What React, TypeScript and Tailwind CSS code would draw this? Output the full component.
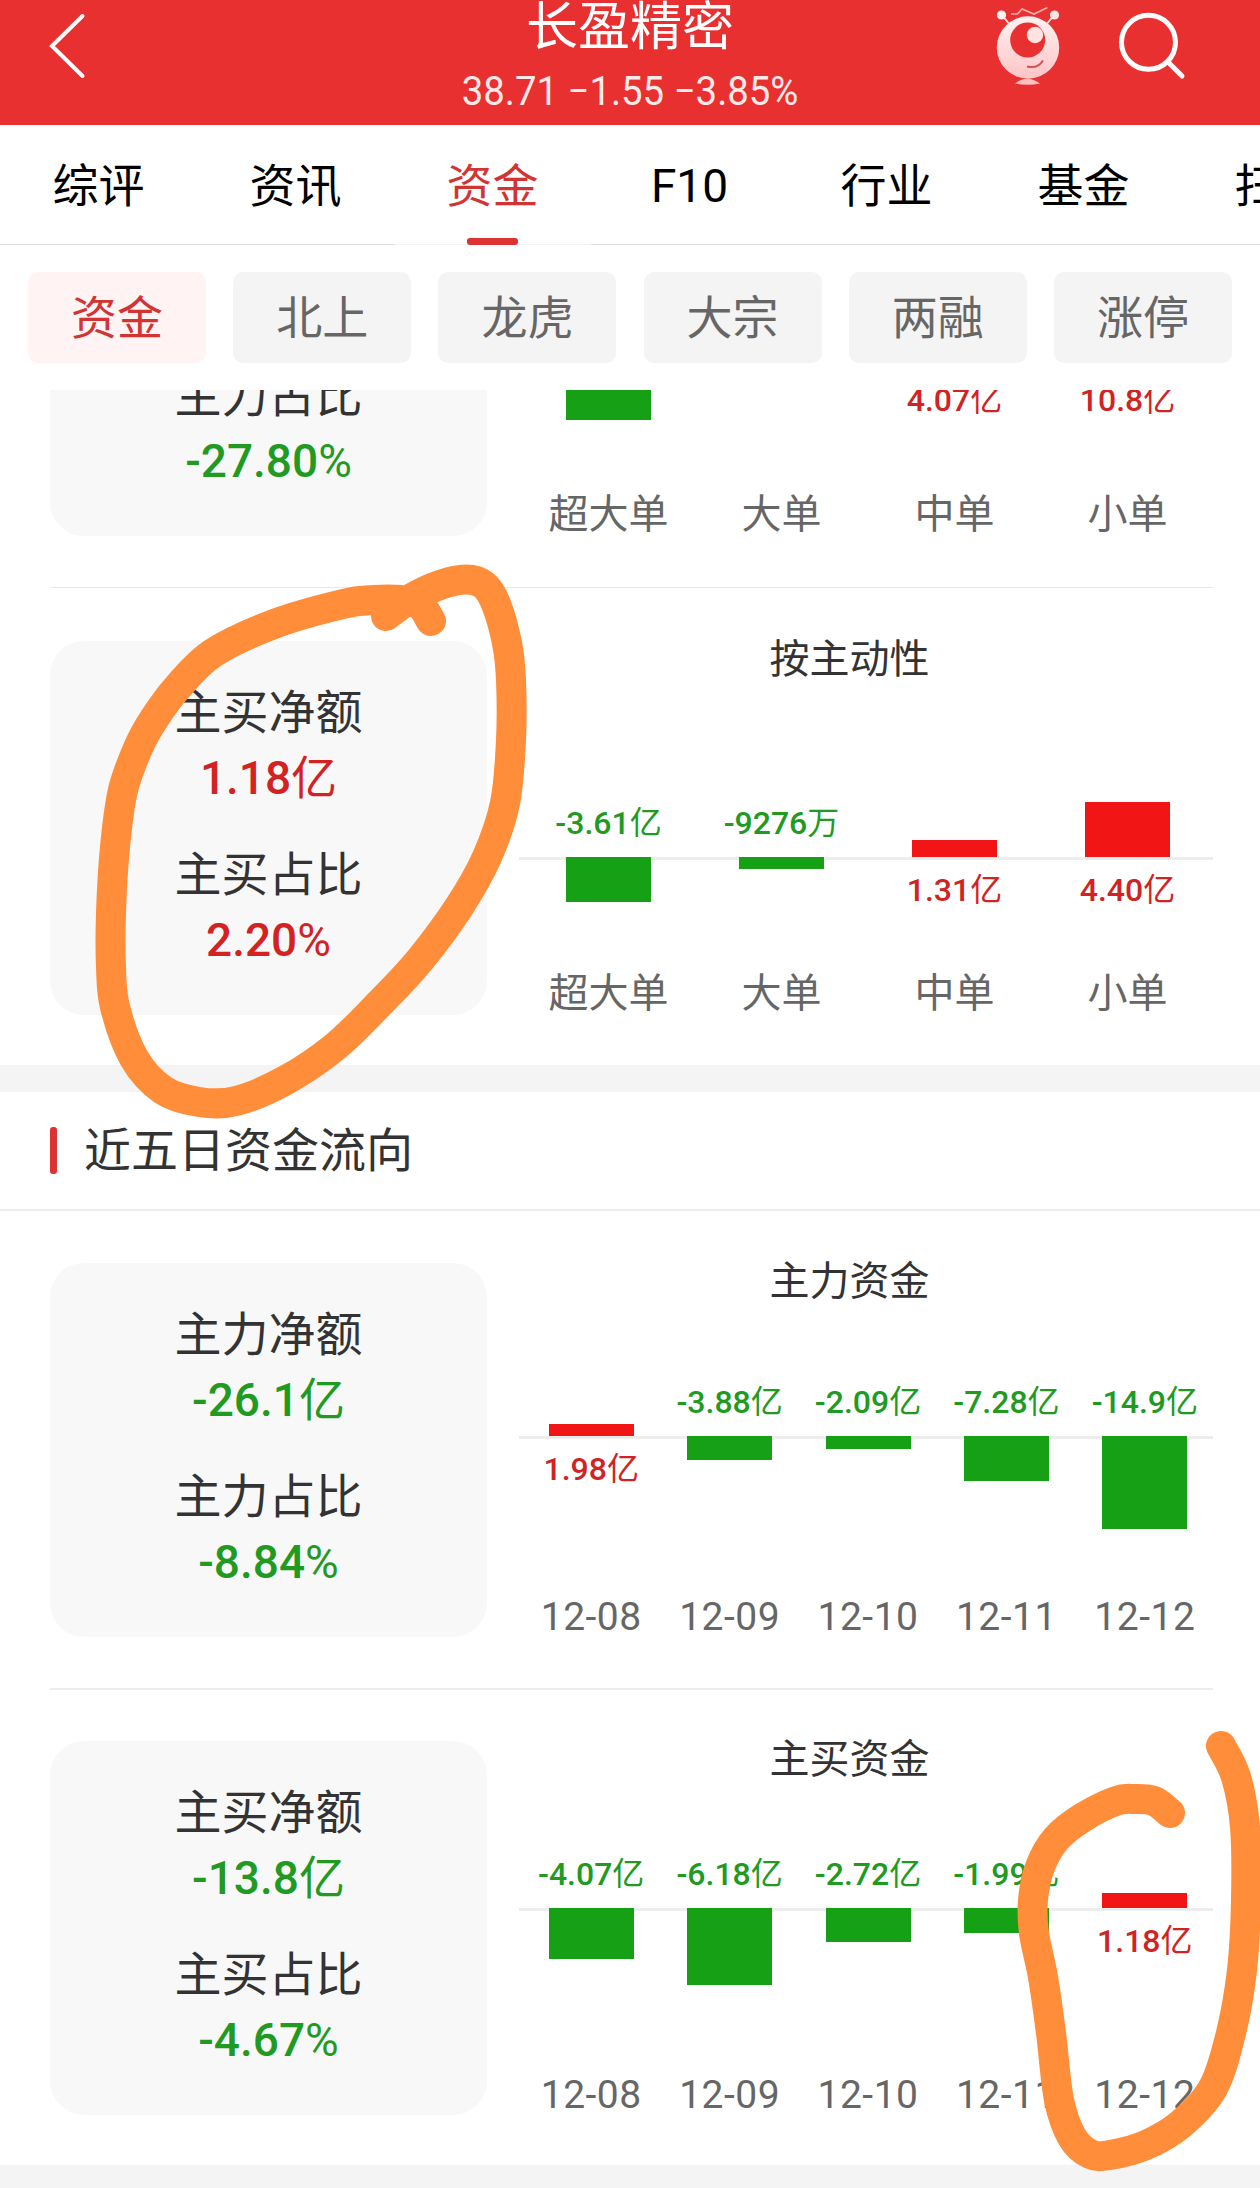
import React from "react";

type Tone = "up" | "down";
type Item = { label: string; value: string; size: number; tone: Tone };
type Stat = { label: string; value: string; tone: Tone };
type Point = [number, number];

const TABS = ["综评", "资讯", "资金", "F10", "行业", "基金", "扫雷"];
const CHIPS = ["资金", "北上", "龙虎", "大宗", "两融", "涨停"];

const BY_SIZE: Item[] = [
  { label: "超大单", value: "", size: 53, tone: "down" },
  { label: "大单", value: "", size: 12, tone: "down" },
  { label: "中单", value: "4.07亿", size: 16, tone: "up" },
  { label: "小单", value: "10.8亿", size: 42, tone: "up" },
];

const BY_ACTIVE: Item[] = [
  { label: "超大单", value: "-3.61亿", size: 45, tone: "down" },
  { label: "大单", value: "-9276万", size: 12, tone: "down" },
  { label: "中单", value: "1.31亿", size: 17, tone: "up" },
  { label: "小单", value: "4.40亿", size: 55, tone: "up" },
];

const MAIN_FUNDS: Item[] = [
  { label: "12-08", value: "1.98亿", size: 12, tone: "up" },
  { label: "12-09", value: "-3.88亿", size: 24, tone: "down" },
  { label: "12-10", value: "-2.09亿", size: 13, tone: "down" },
  { label: "12-11", value: "-7.28亿", size: 45, tone: "down" },
  { label: "12-12", value: "-14.9亿", size: 93, tone: "down" },
];

const BUY_FUNDS: Item[] = [
  { label: "12-08", value: "-4.07亿", size: 51, tone: "down" },
  { label: "12-09", value: "-6.18亿", size: 77, tone: "down" },
  { label: "12-10", value: "-2.72亿", size: 34, tone: "down" },
  { label: "12-11", value: "-1.99亿", size: 25, tone: "down" },
  { label: "12-12", value: "1.18亿", size: 15, tone: "up" },
];

const LEFT_MARK: Point[] = [
  [431, 621], [420, 605], [400, 600], [374, 600], [343, 604], [274, 624], [213, 653], [177, 688],
  [154, 719], [139, 746], [123, 790], [115, 847], [111, 913], [111, 967], [115, 1007], [134, 1058], [163, 1090],
  [199, 1102], [236, 1101], [286, 1080], [336, 1046], [383, 1000], [420, 960], [459, 907], [487, 857],
  [505, 803], [511, 740], [511, 680], [507, 643], [496, 604], [484, 585], [466, 579.5], [440, 585],
  [410, 599], [386, 616],
];

const RIGHT_MARK: Point[] = [
  [1170, 1813], [1154, 1801], [1135, 1799], [1116, 1801], [1082, 1818], [1056, 1839], [1040, 1867],
  [1033, 1900], [1034, 1933], [1043, 1977], [1051, 2033], [1059, 2100], [1072, 2137], [1090, 2154],
  [1110, 2155], [1146, 2145], [1181, 2124], [1213, 2088], [1231, 2033], [1242, 1970], [1246, 1900], [1245, 1827],
  [1236, 1777], [1221, 1746],
];

/** Catmull-Rom spline through the points, as cubic segments. */
function smooth(points: Point[]) {
  let d = `M${points[0][0]} ${points[0][1]}`;
  for (let i = 0; i < points.length - 1; i++) {
    const p0 = points[i - 1] ?? points[i];
    const p1 = points[i];
    const p2 = points[i + 1];
    const p3 = points[i + 2] ?? p2;
    d += ` C${p1[0] + (p2[0] - p0[0]) / 6} ${p1[1] + (p2[1] - p0[1]) / 6} ${p2[0] - (p3[0] - p1[0]) / 6} ${
      p2[1] - (p3[1] - p1[1]) / 6
    } ${p2[0]} ${p2[1]}`;
  }
  return d;
}

function Mascot() {
  return (
    <svg className="h-[86px] w-[66px]" viewBox="995 4 66 86" fill="none">
      <defs>
        <linearGradient id="skin" x1="0" y1="0" x2="0" y2="1">
          <stop offset="0" stopColor="#fff2f2" />
          <stop offset="1" stopColor="#ffc4c6" />
        </linearGradient>
      </defs>
      <path d="M1002 15l8 10M1054 15l-8 10" stroke="#ffd9d9" strokeWidth="2" />
      <circle cx="1001.5" cy="15" r="4.6" fill="#fff0f0" />
      <circle cx="1054.5" cy="15" r="4.6" fill="#ffe4e4" />
      <path d="M1011 14h6.5l4.5-5 12 5 13.5-6.500" stroke="#ffb0b0" strokeWidth="1.600" />
      <circle cx="1028" cy="47.500" r="31.200" fill="url(#skin)" />
      <circle cx="1027.700" cy="40" r="17.500" fill="#e93030" />
      <circle cx="1035" cy="35" r="8.200" fill="#ffe3e3" />
      <path d="M1027 66.500q11 2.500 16-6" stroke="#cf5358" strokeWidth="2" />
      <path d="M1015 83.500q12-9.500 25 0q-12 2.500-25 0z" fill="#ffc0c0" />
    </svg>
  );
}

function Header() {
  return (
    <header className="grid h-[125px] grid-cols-[1fr_400px_1fr] bg-[#e93030] text-white">
      <svg className="mt-[12px] ml-[48px] h-[68px] w-[40px]" viewBox="48 12 40 68" fill="none" stroke="white" strokeWidth="4" strokeLinecap="round">
        <path d="M82.500 16L52 46l30.500 30" />
      </svg>
      <div className="flex flex-col items-center">
        <h1 className="h-[56px] text-[52px] leading-[56px] whitespace-nowrap">长盈精密</h1>
        <p className="h-[60px] origin-center scale-x-[0.935] text-[41px] leading-[70px] whitespace-nowrap text-[#ffe9e9]">
          38.71 −1.55 −3.85%
        </p>
      </div>
      <div className="flex items-start">
        <div className="ml-[165px] pt-[4px]">
          <Mascot />
        </div>
        <svg className="mt-[10px] ml-[56px] h-[70px] w-[70px]" viewBox="1117 10 70 70" fill="none" stroke="white" strokeWidth="5" strokeLinecap="round">
          <circle cx="1148.500" cy="42.300" r="27" />
          <path d="M1168.500 62.500L1182 76" />
        </svg>
      </div>
    </header>
  );
}

function Tabs() {
  return (
    <nav className="flex h-[120px] overflow-hidden">
      {TABS.map((tab) => {
        const active = tab === "资金";
        return (
          <div
            key={tab}
            className={`flex w-[197px] shrink-0 flex-col items-center border-b ${
              active ? "border-[#f3f3f3] text-[#d23434]" : "border-[#dcdcdc] text-black"
            }`}
          >
            <span className="h-[113px] text-[46px] leading-[123px] whitespace-nowrap">{tab}</span>
            {active && <span className="h-[7px] w-[51px] shrink-0 rounded-[3px] bg-[#dc3232]" />}
          </div>
        );
      })}
    </nav>
  );
}

function Chips() {
  return (
    <div className="flex h-[145px] justify-between px-[28px] pt-[27px]">
      {CHIPS.map((chip, i) => (
        <div
          key={chip}
          className={`h-[91px] w-[178px] rounded-[10px] text-center text-[46px] leading-[93px] ${
            i === 0 ? "bg-[#fff3f3] text-[#d23434]" : "bg-[#f4f4f4] text-[#666]"
          }`}
        >
          {chip}
        </div>
      ))}
    </div>
  );
}

/** A figure with medium digits and a regular-weight unit. */
function Figure({ value }: { value: string }) {
  return (
    <>
      <span className="font-medium">{value.slice(0, -1)}</span>
      {value.slice(-1)}
    </>
  );
}

function StatLine({ label, value, tone }: Stat) {
  return (
    <div className="flex flex-col items-center">
      <span className="h-[66px] text-[47px] leading-[67px] text-[#333]">{label}</span>
      <span className={`h-[66px] text-[46px] leading-[66px] ${tone === "up" ? "text-[#d32222]" : "text-[#219a22]"}`}>
        <Figure value={value} />
      </span>
    </div>
  );
}

function StatCard({ stats }: { stats: Stat[] }) {
  return (
    <div className="flex h-[374px] w-[437px] shrink-0 flex-col justify-end gap-[30px] rounded-[34px] bg-[#f8f8f8] pb-[42px]">
      {stats.map((s) => (
        <StatLine key={s.label} {...s} />
      ))}
    </div>
  );
}

function Bar({ item }: { item: Item }) {
  return (
    <div
      className={`relative w-[85px] shrink-0 ${item.tone === "up" ? "bg-[#f11515]" : "bg-[#16a016]"}`}
      style={{ height: item.size }}
    />
  );
}

function Chart({ title, items, rise }: { title?: string; items: Item[]; rise: string }) {
  const dates = items.length === 5;
  return (
    <div className="flex h-[374px] flex-1 flex-col">
      <h3 className="h-[36px] pr-[33px] text-center text-[40px] leading-[38px] text-[#333]">{title}</h3>
      <div className={`-mr-px flex pl-[3px] ${rise}`}>
        {items.map((item) => (
          <div key={item.label} className="flex flex-1 flex-col items-center justify-end">
            {item.tone === "up" ? (
              <Bar item={item} />
            ) : (
              <span className="mb-[14px] h-[40px] text-[32px] leading-[40px] whitespace-nowrap text-[#219a22]">
                <Figure value={item.value} />
              </span>
            )}
          </div>
        ))}
      </div>
      <div className="relative -mr-px flex flex-1 pl-[3px]">
        <div className="absolute top-0 right-px left-0 h-[3px] bg-[#ededed]" />
        {items.map((item) => (
          <div key={item.label} className="flex flex-1 flex-col items-center justify-between">
            {item.tone === "down" ? (
              <Bar item={item} />
            ) : (
              <span className="mt-[13px] h-[40px] text-[32px] leading-[40px] whitespace-nowrap text-[#d02424]">
                <Figure value={item.value} />
              </span>
            )}
            <span
              className={`h-[44px] whitespace-nowrap text-[#666] ${
                dates ? "text-[39px] leading-[48px] tracking-[0.5px]" : "text-[40px] leading-[46px]"
              }`}
            >
              {item.label}
            </span>
          </div>
        ))}
      </div>
    </div>
  );
}

function Panel({ stats, ...chart }: { stats: Stat[]; title?: string; items: Item[]; rise: string }) {
  return (
    <section className="flex gap-[32px] pr-[47px] pl-[50px]">
      <StatCard stats={stats} />
      <Chart {...chart} />
    </section>
  );
}

function Marks() {
  return (
    <svg
      className="pointer-events-none absolute inset-0 h-[2188px] w-[1260px]"
      viewBox="0 0 1260 2188"
      fill="none"
      stroke="#ff8d3a"
      strokeWidth="30"
      strokeLinecap="round"
      strokeLinejoin="round"
    >
      <path d={smooth(LEFT_MARK)} />
      <path d={smooth(RIGHT_MARK)} />
    </svg>
  );
}

export default function App() {
  return (
    <div className="relative h-[2188px] w-[1260px] overflow-hidden bg-white font-[Roboto,'Noto_Sans_CJK_SC',sans-serif]">
      <Header />
      <Tabs />
      <Chips />
      <div className="flex h-[197px] flex-col justify-end overflow-hidden pb-[51px]">
        <Panel
          stats={[{ label: "主力占比", value: "-27.80%", tone: "down" }]}
          items={BY_SIZE}
          rise="h-[169px]"
        />
      </div>
      <div className="mr-[47px] mb-[53px] ml-[50px] h-px bg-[#e9e9e9]" />
      <Panel
        stats={[
          { label: "主买净额", value: "1.18亿", tone: "up" },
          { label: "主买占比", value: "2.20%", tone: "up" },
        ]}
        title="按主动性"
        items={BY_ACTIVE}
        rise="h-[180px]"
      />
      <div className="mt-[50px] h-[27px] bg-[#f4f4f4]" />
      <div className="flex h-[119px] items-center gap-[27px] border-b-2 border-[#ededed] pl-[50px]">
        <span className="h-[47px] w-[7px] rounded-[3px] bg-[#dc3232]" />
        <h2 className="text-[47px] leading-[60px] text-[#333]">近五日资金流向</h2>
      </div>
      <div className="pt-[52px]">
        <Panel
          stats={[
            { label: "主力净额", value: "-26.1亿", tone: "down" },
            { label: "主力占比", value: "-8.84%", tone: "down" },
          ]}
          title="主力资金"
          items={MAIN_FUNDS}
          rise="h-[137px]"
        />
      </div>
      <div className="mt-[51px] mr-[47px] mb-[51px] ml-[50px] h-[2px] bg-[#ededed]" />
      <Panel
        stats={[
          { label: "主买净额", value: "-13.8亿", tone: "down" },
          { label: "主买占比", value: "-4.67%", tone: "down" },
        ]}
        title="主买资金"
        items={BUY_FUNDS}
        rise="h-[131px]"
      />
      <div className="mt-[50px] h-[23px] bg-[#f4f4f4]" />
      <Marks />
    </div>
  );
}
